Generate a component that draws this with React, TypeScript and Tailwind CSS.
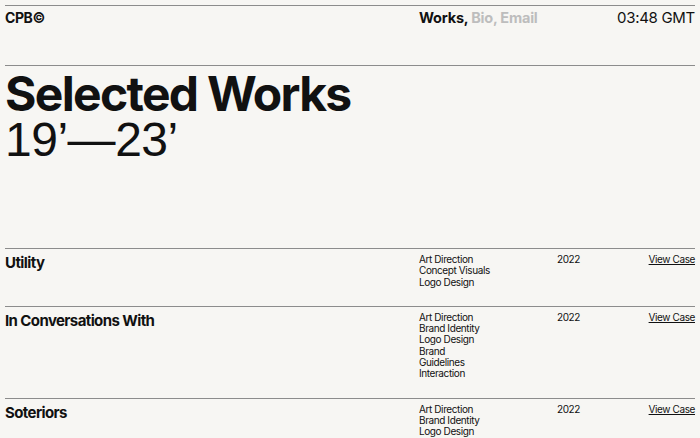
import React from "react";

const works = [
  { title: "Utility", tags: ["Art Direction", "Concept Visuals", "Logo Design"], year: "2022" },
  {
    title: "In Conversations With",
    tags: ["Art Direction", "Brand Identity", "Logo Design", "Brand", "Guidelines", "Interaction"],
    year: "2022",
  },
  { title: "Soteriors", tags: ["Art Direction", "Brand Identity", "Logo Design"], year: "2022" },
];

const App = () => {
  return (
    <div className="min-h-screen bg-[#f7f6f3] text-[#111] font-['Inter',sans-serif] px-[5px] pt-[5px] overflow-hidden">
      {/* header */}
      <header className="border-t border-[#8c8c8c] grid grid-cols-[414px_1fr_auto] h-[60px] pt-[2px]">
        <div className="text-[14px] font-bold tracking-[-0.03em] leading-[20px]">CPB©</div>
        <div className="text-[14.5px] font-bold tracking-[-0.015em] leading-[20px]">
          Works, <span className="text-[#bdbdbd]">Bio, Email</span>
        </div>
        <div className="text-[15px] tracking-[-0.02em] leading-[20px]">03:48 GMT</div>
      </header>

      {/* title */}
      <section className="border-t border-[#8c8c8c] h-[183px] pt-[5px]">
        <h1 className="text-[48px] font-bold tracking-[-0.035em] leading-[46px]">Selected Works</h1>
        <p className="font-['Liberation_Sans',sans-serif] text-[48px] font-normal tracking-[-0.01em] leading-[46px]">
          19’—23’
        </p>
      </section>

      {/* works list */}
      {works.map((w) => (
        <div
          key={w.title}
          className="border-t border-[#8c8c8c] grid grid-cols-[414px_138px_1fr] pt-[4px] pb-[18px]"
        >
          <div className="text-[15px] font-bold tracking-[-0.04em] leading-[20px]">{w.title}</div>
          <div className="text-[10px] tracking-[-0.04em] leading-[11.3px] pt-[1px]">
            {w.tags.map((t) => (
              <div key={t}>{t}</div>
            ))}
          </div>
          <div className="flex justify-between text-[10px] tracking-[-0.04em] leading-[11.3px] pt-[1px]">
            <span>{w.year}</span>
            <a href="#" className="underline">View Case</a>
          </div>
        </div>
      ))}
    </div>
  );
};

export default App;
